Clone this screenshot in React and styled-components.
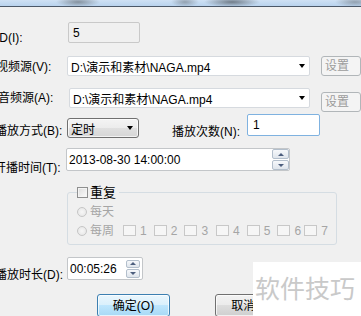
import React from "react";
import styled, { createGlobalStyle } from "styled-components";

const GlobalStyle = createGlobalStyle`
  html, body { margin: 0; padding: 0; background: #f0f0f0; }
  body {
    font-family: "Liberation Sans", "Noto Sans CJK SC", sans-serif;
    font-size: 12px;
    color: #000;
  }
  * { box-sizing: border-box; }
`;

const Page = styled.div`
  position: relative;
  width: 361px;
  height: 316px;
  overflow: hidden;
  background: #f0f0f0;
`;

const TitleBar = styled.div`
  height: 7px;
  border-bottom: 1px solid #4b5868;
  background:
    radial-gradient(ellipse 22px 5px at 78px 2px, rgba(110,120,130,0.75), rgba(110,120,130,0) 100%),
    radial-gradient(ellipse 14px 5px at 185px 2px, rgba(110,120,130,0.6), rgba(110,120,130,0) 100%),
    radial-gradient(ellipse 28px 5px at 232px 2px, rgba(90,100,110,0.8), rgba(90,100,110,0) 100%),
    radial-gradient(ellipse 20px 5px at 355px 2px, rgba(110,120,130,0.6), rgba(110,120,130,0) 100%),
    linear-gradient(#cfe1f4, #b9d3ee);
`;

const Form = styled.div`
  display: flex;
  flex-direction: column;
`;

const Row = styled.div`
  display: flex;
  align-items: flex-start;
  height: ${(p) => p.$h}px;
  margin-top: ${(p) => p.$mt}px;
`;

const Label = styled.div`
  flex: none;
  width: ${(p) => p.$w || 71}px;
  margin-left: ${(p) => (p.$ml === undefined ? -5 : p.$ml)}px;
  padding-top: ${(p) => p.$pt}px;
  line-height: 14px;
  white-space: nowrap;
`;

const ReadOnlyField = styled.div`
  width: ${(p) => p.$w}px;
  height: 21px;
  margin-left: ${(p) => p.$ml || 0}px;
  border: 1px solid #c9c9c9;
  border-radius: 2px;
  background: #f0f0f0;
  padding: 3px 0 0 4px;
  line-height: 14px;
`;

const EditField = styled.div`
  width: ${(p) => p.$w}px;
  height: 22px;
  border: 1px solid #7fb2e0;
  border-radius: 2px;
  background: #fff;
  padding: 3px 0 0 5px;
  line-height: 14px;
`;

const EditCombo = styled.div`
  width: 254px;
  height: 20px;
  border: 1px solid #d6dadf;
  border-radius: 2px;
  background: #fff;
  display: flex;
  align-items: center;
  justify-content: space-between;
  padding: 0 4px 0 3px;
  white-space: nowrap;
`;

const Arrow = styled.span`
  width: 0;
  height: 0;
  border-left: 3.5px solid transparent;
  border-right: 3.5px solid transparent;
  border-top: 4px solid #000;
`;

const SetButton = styled.div`
  flex: none;
  width: 40px;
  height: 20px;
  margin-left: 11px;
  margin-top: ${(p) => p.$dy}px;
  border: 1px solid #b1b6b9;
  border-radius: 3px;
  background: #f4f4f4;
  color: #9c9c9c;
  line-height: 18px;
  padding-left: 3px;
  white-space: nowrap;
`;

const DropList = styled.div`
  width: 72px;
  height: 20px;
  margin-left: 1px;
  margin-top: 4px;
  border: 1px solid #707070;
  border-radius: 3px;
  background: linear-gradient(#f4f4f4 0%, #ececec 50%, #e0e0e0 50%, #d6d6d6 100%);
  box-shadow: inset 0 0 0 1px rgba(255, 255, 255, 0.7);
  display: flex;
  align-items: center;
  justify-content: space-between;
  padding: 0 5px 0 3px;
`;

const DateField = styled.div`
  width: ${(p) => p.$w}px;
  height: 23px;
  margin-left: ${(p) => p.$ml || 0}px;
  border: 1px solid #c3c6c9;
  border-radius: 2px;
  background: #fff;
  display: flex;
  align-items: center;
  justify-content: space-between;
  padding-left: 2px;
  padding-right: ${(p) => p.$pr || 0}px;
  white-space: nowrap;
`;

const FieldText = styled.span`
  line-height: 14px;
`;

const Spinner = styled.div`
  flex: none;
  width: ${(p) => p.$w}px;
  height: ${(p) => p.$h}px;
  display: flex;
  flex-direction: column;
  gap: 1px;
`;

const SpinBtn = styled.div`
  flex: 1;
  border: 1px solid #b3bfcc;
  border-radius: 2px;
  background: linear-gradient(#f6f8fb, #dfe5ec);
  display: flex;
  align-items: center;
  justify-content: center;
`;

const Tri = styled.span`
  width: 0;
  height: 0;
  border-left: 3px solid transparent;
  border-right: 3px solid transparent;
  ${(p) =>
    p.$up ? "border-bottom: 3px solid #4c5e7e;" : "border-top: 3px solid #4c5e7e;"}
`;

const Group = styled.fieldset`
  margin: 15px 0 0 67px;
  width: 270px;
  height: 59px;
  border: 1px solid #d5dde3;
  border-radius: 3px;
  padding: 0 0 0 9px;
`;

const Legend = styled.legend`
  padding: 0 3px 0 0;
  display: flex;
  align-items: center;
  gap: 2px;
  line-height: 13px;
  font-size: 13px;
`;

const CheckBox = styled.span`
  flex: none;
  width: ${(p) => p.$w || 11}px;
  height: 11px;
  border: 1px solid ${(p) => (p.$disabled ? "#c8c8c8" : "#8e8f8f")};
  background: ${(p) =>
    p.$disabled ? "#f6f6f6" : "linear-gradient(135deg, #dcdcdc, #fbfbfb)"};
  box-shadow: ${(p) => (p.$disabled ? "none" : "inset 0 0 0 1px #f4f4f4")};
`;

const OptionRow = styled.div`
  display: flex;
  align-items: center;
  height: 19px;
  margin-top: ${(p) => p.$mt || 0}px;
  color: #a5a5a5;
`;

const Radio = styled.span`
  flex: none;
  width: 10px;
  height: 10px;
  border-radius: 50%;
  border: 1px solid #c6c6c6;
  background: radial-gradient(circle at 50% 50%, #f7f7f7, #e3e3e3);
  margin-right: 3px;
`;

const OptText = styled.span`
  font-size: 12px;
  line-height: 14px;
`;

const DayItem = styled.span`
  display: flex;
  align-items: center;
  gap: 4px;
  margin-left: ${(p) => p.$ml}px;
  line-height: 12px;
`;

const ButtonRow = styled.div`
  display: flex;
  margin-top: 14px;
  padding-left: 97px;
  gap: 45px;
`;

const DlgButton = styled.div`
  width: 73px;
  height: 23px;
  border-radius: 3px;
  border: 1px solid ${(p) => (p.$primary ? "#3c7fb1" : "#707070")};
  background: ${(p) =>
    p.$primary
      ? "linear-gradient(#eaf6fd 0%, #d9f0fc 50%, #bee6fd 50%, #a7d9f5 100%)"
      : "linear-gradient(#f2f2f2 0%, #ebebeb 50%, #dddddd 50%, #cfcfcf 100%)"};
  box-shadow: inset 0 0 0 1px rgba(255, 255, 255, 0.7);
  display: flex;
  align-items: center;
  justify-content: center;
  line-height: 14px;
  white-space: nowrap;
`;

const Watermark = styled.div`
  position: absolute;
  left: 253px;
  top: 262px;
  width: 108px;
  height: 54px;
  background: #fff;
  color: #c9c9c9;
  font-family: "Noto Sans CJK SC", sans-serif;
  font-size: 25px;
  line-height: 50px;
  padding-left: 2px;
  white-space: nowrap;
`;

const Spin = ({ w, h }) => (
  <Spinner $w={w} $h={h}>
    <SpinBtn>
      <Tri $up />
    </SpinBtn>
    <SpinBtn>
      <Tri />
    </SpinBtn>
  </Spinner>
);

const days = [
  { n: 1, ml: 9 },
  { n: 2, ml: 7 },
  { n: 3, ml: 7 },
  { n: 4, ml: 8 },
  { n: 5, ml: 7 },
  { n: 6, ml: 7 },
  { n: 7, ml: 3 },
];

export default function App() {
  return (
    <Page>
      <GlobalStyle />
      <TitleBar />
      <Form>
        <Row $mt={15} $h={21}>
          <Label $pt={9} $ml={-4}>ID(I):</Label>
          <ReadOnlyField $w={72} $ml={1}>5</ReadOnlyField>
        </Row>
        <Row $mt={13} $h={20}>
          <Label $pt={4} $ml={-4}>视频源(V):</Label>
          <EditCombo>
            <span>{"D:\\演示和素材\\NAGA.mp4"}</span>
            <Arrow />
          </EditCombo>
          <SetButton $dy={0}>设置</SetButton>
        </Row>
        <Row $mt={12} $h={20}>
          <Label $pt={3} $ml={-2}>音频源(A):</Label>
          <EditCombo>
            <span>{"D:\\演示和素材\\NAGA.mp4"}</span>
            <Arrow />
          </EditCombo>
          <SetButton $dy={4}>设置</SetButton>
        </Row>
        <Row $mt={6} $h={24}>
          <Label $pt={10}>播放方式(B):</Label>
          <DropList>
            <span>定时</span>
            <Arrow />
          </DropList>
          <Label $pt={11} $ml={33} $w={75}>播放次数(N):</Label>
          <EditField $w={73}>1</EditField>
        </Row>
        <Row $mt={10} $h={23}>
          <Label $pt={13} $ml={-6} $w={72}>开播时间(T):</Label>
          <DateField $w={224}>
            <FieldText>2013-08-30 14:00:00</FieldText>
            <Spin w={17} h={21} />
          </DateField>
        </Row>
        <Group>
          <Legend>
            <CheckBox />
            <span>重复</span>
          </Legend>
          <OptionRow $mt={3}>
            <Radio />
            <OptText>每天</OptText>
          </OptionRow>
          <OptionRow>
            <Radio />
            <OptText>每周</OptText>
            {days.map((d) => (
              <DayItem key={d.n} $ml={d.ml}>
                <CheckBox $disabled $w={13} />
                <span>{d.n}</span>
              </DayItem>
            ))}
          </OptionRow>
        </Group>
        <Row $mt={12} $h={23}>
          <Label $pt={11}>播放时长(D):</Label>
          <DateField $w={76} $ml={1} $pr={2}>
            <FieldText>00:05:26</FieldText>
            <Spin w={14} h={18} />
          </DateField>
        </Row>
        <ButtonRow>
          <DlgButton $primary>确定(O)</DlgButton>
          <DlgButton>取消(C)</DlgButton>
        </ButtonRow>
      </Form>
      <Watermark>软件技巧</Watermark>
    </Page>
  );
}
